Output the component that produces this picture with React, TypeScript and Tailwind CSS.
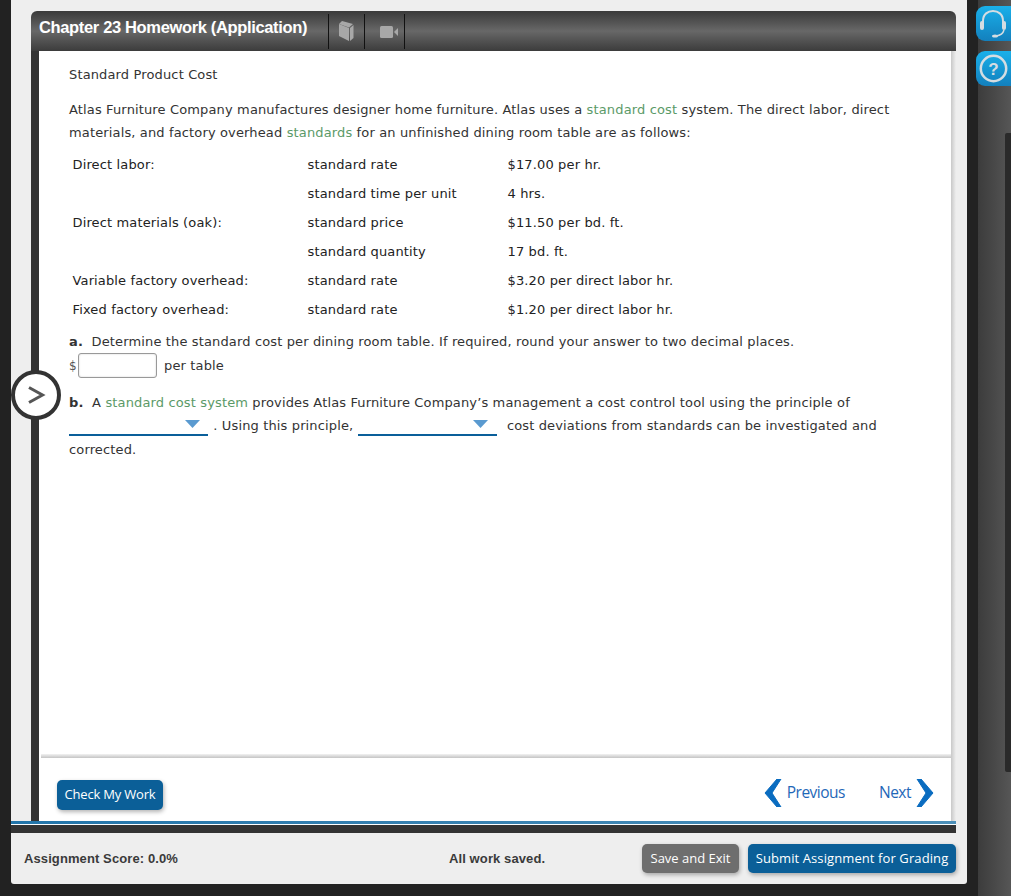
import React from "react";

const Term = ({ children }: { children: React.ReactNode }) => (
  <span className="text-[#5b9a68]">{children}</span>
);

const Row = ({ a, b, c }: { a?: string; b: string; c: string }) => (
  <div className="grid h-[29px] grid-cols-[235px_200px_1fr] items-center text-[#222]">
    <div>{a}</div>
    <div>{b}</div>
    <div>{c}</div>
  </div>
);

const Drop = ({ cls }: { cls?: string }) => (
  <span className={`relative inline-block h-[22px] w-[139px] border-b-2 border-[#0a5f9a] align-top ${cls ?? ""}`}>
    <svg className="absolute right-[8.5px] top-[6px]" width="15" height="8" viewBox="0 0 15 8">
      <path d="M0 0H15L7.5 8Z" fill="#5a9ad0" />
    </svg>
  </span>
);

const sideBtn = "-ml-[2px] flex h-[35px] w-[35px] items-center rounded-l-[9px] bg-gradient-to-b from-[#1ab0ea] to-[#1380bd] pl-[3px]";

export default function App() {
  return (
    <div className="relative flex h-[896px] w-[1011px] overflow-hidden bg-[#222] font-['DejaVu_Sans',sans-serif] text-[13px] tracking-[0.14px]">
      <div className="ml-[11px] flex h-[884px] w-[956px] flex-col rounded-b-[3px] bg-[#eee]">
        <div className="ml-[20px] mt-[11px] flex h-[40px] w-[925px] shrink-0 items-stretch rounded-t-[6px] bg-gradient-to-b from-[#3a3a3a] via-[#686868] to-[#3c3c3c]">
          <div className="w-[297px] pl-[8px] pt-[4px] font-['Liberation_Sans',sans-serif] text-[16.5px] font-bold tracking-[-0.35px] text-white">
            Chapter 23 Homework (Application)
          </div>
          <div className="mt-[3px] flex h-[35px] w-[37px] items-center justify-center border-x border-[#111] pb-[1px]">
            <svg width="15" height="20" viewBox="0 0 15 20">
              <path d="M0 3 L10 7 V20 L0 15 Z" fill="#a8a8a8" />
              <path d="M0 3 L3 0 L14 3 L10 6.5 Z" fill="#a8a8a8" />
              <path d="M11 7 L14.5 4 V17 L11 20 Z" fill="#a8a8a8" />
            </svg>
          </div>
          <div className="mt-[3px] flex h-[35px] w-[40px] items-center justify-center border-r border-[#111] pl-[8px]">
            <svg width="18" height="12" viewBox="0 0 18 12">
              <rect x="0" y="0" width="13" height="12" rx="1.5" fill="#a8a8a8" />
              <path d="M14 6 L18 2 V10 Z" fill="#a8a8a8" />
            </svg>
          </div>
        </div>

        <div className="ml-[20px] flex h-[770px] w-[925px] shrink-0 border-l-[8px] border-l-[#333]">
          <div className="flex min-w-0 flex-1 flex-col bg-white">
            <div className="relative h-[707px] shrink-0 pl-[30px] pr-[40px] text-[#333]">
              <div className="pt-[14px] leading-[19px]">Standard Product Cost</div>
              <p className="mt-[14px] leading-[23px]">
                Atlas Furniture Company manufactures designer home furniture. Atlas uses a <Term>standard cost</Term> system. The direct labor, direct materials, and factory overhead <Term>standards</Term> for an unfinished dining room table are as follows:
              </p>
              <div className="mt-[6px] pl-[3.5px]">
                <Row a="Direct labor:" b="standard rate" c="$17.00 per hr." />
                <Row b="standard time per unit" c="4 hrs." />
                <Row a="Direct materials (oak):" b="standard price" c="$11.50 per bd. ft." />
                <Row b="standard quantity" c="17 bd. ft." />
                <Row a="Variable factory overhead:" b="standard rate" c="$3.20 per direct labor hr." />
                <Row a="Fixed factory overhead:" b="standard rate" c="$1.20 per direct labor hr." />
              </div>
              <p className="mt-[8px] leading-[19px]">
                <b>a.</b>&nbsp; Determine the standard cost per dining room table. If required, round your answer to two decimal places.
              </p>
              <div className="mt-[2px] flex h-[26px] items-center">
                <span className="w-[9px] text-[12px] text-[#555]">$</span>
                <span className="-mt-[1px] h-[25px] w-[79px] rounded-[3px] border border-[#999] bg-white shadow-[inset_0_0_2px_#ccc]" />
                <span className="ml-[7px]">per table</span>
              </div>
              <p className="mt-[12px] leading-[23.4px]">
                <b>b.</b>&nbsp; A <Term>standard cost system</Term> provides Atlas Furniture Company’s management a cost control tool using the principle of
                <br />
                <Drop cls="mr-[1px]" /> . Using this principle, <Drop cls="mr-[6px]" /> cost deviations from standards can be investigated and corrected.
              </p>
              <div className="absolute bottom-0 left-[2px] right-0 h-[4px] bg-gradient-to-b from-[#f2f2f2] to-[#c4c4c4]" />
            </div>
            <div className="flex h-[63px] items-start justify-between pl-[18px] pr-[17px] pt-[22px]">
              <button className="flex h-[30px] w-[106px] items-center justify-center rounded-[5px] bg-[#0b5f98] font-['Open_Sans',sans-serif] text-[13px] font-medium tracking-[-0.2px] text-white shadow-[1px_2px_4px_rgba(0,0,0,0.3)]">
                Check My Work
              </button>
              <div className="-mt-[1px] flex h-[28px] items-center font-['Open_Sans',sans-serif] text-[15.5px] tracking-[-0.5px] text-[#1f68b8]">
                <svg width="18" height="28" viewBox="0 0 18 28">
                  <path d="M13 0 H17 L8 14 L17 28 H13 L1 14 Z" fill="#0a6cc0" stroke="#0a6cc0" />
                </svg>
                <span className="ml-[5px]">Previous</span>
                <span className="ml-[34px]">Next</span>
                <svg className="ml-[5px]" width="18" height="28" viewBox="0 0 18 28">
                  <path d="M5 0 H1 L10 14 L1 28 H5 L17 14 Z" fill="#0a6cc0" stroke="#0a6cc0" />
                </svg>
              </div>
            </div>
          </div>
          <div className="h-full w-[5px] bg-gradient-to-r from-[#c8c8c8] to-[#eee]" />
        </div>

        <div className="h-[3px] w-[945px] shrink-0 bg-gradient-to-r from-[#2275aa] to-[#4c8fb8]" />
        <div className="h-[1px] w-[945px] shrink-0 bg-white" />
        <div className="h-[8px] w-[945px] shrink-0 bg-[#333]" />
        <div className="flex flex-1 items-center pl-[13px] pr-[11px] font-['Liberation_Sans',sans-serif] text-[13px] font-bold tracking-[0.1px] text-[#3a3a3a]">
          <div className="w-[425px]">Assignment Score: 0.0%</div>
          <div>All work saved.</div>
          <div className="ml-auto flex gap-[9px] font-['Open_Sans',sans-serif] text-[13px] font-medium tracking-normal text-white">
            <button className="h-[29px] w-[97px] rounded-[5px] bg-[#6e6e6e] shadow-[1px_2px_4px_rgba(0,0,0,0.3)]">Save and Exit</button>
            <button className="h-[29px] w-[208px] rounded-[5px] bg-[#0b5f98] tracking-[0.1px] shadow-[1px_2px_4px_rgba(0,0,0,0.3)]">Submit Assignment for Grading</button>
          </div>
        </div>
      </div>

      <div className="ml-[11px] flex h-[896px] w-[33px] flex-col gap-[10px] bg-gradient-to-r from-[#3c3c3c] to-[#565656] pt-[6px]">
        <div className={sideBtn}>
          <svg width="28" height="28" viewBox="0 0 28 28" fill="none">
            <path d="M4 14 V11 C4 4 9 1 14 1 C19 1 24 4 24 11 V14" stroke="#d5dde2" strokeWidth="2" />
            <rect x="1" y="11" width="4" height="9" rx="2" fill="#d5dde2" />
            <rect x="23" y="11" width="4" height="9" rx="2" fill="#d5dde2" />
            <path d="M25 20 C24 24 21 25.5 17 26" stroke="#d5dde2" strokeWidth="1.5" />
            <ellipse cx="16" cy="26" rx="3" ry="1.6" fill="#d5dde2" />
          </svg>
        </div>
        <div className={sideBtn}>
          <svg width="29" height="29" viewBox="0 0 29 29" fill="none">
            <circle cx="14.5" cy="14.5" r="12.7" stroke="#d5dde2" strokeWidth="2.5" />
            <text x="14.5" y="20.5" textAnchor="middle" fontFamily="Liberation Sans, sans-serif" fontWeight="700" fontSize="17" fill="#d5dde2">?</text>
          </svg>
        </div>
      </div>

      <div className="absolute left-[1005px] top-[133px] h-[639px] w-[6px] rounded-l-[2px] bg-[#2a2a2a]" />

      <div className="absolute left-[11px] top-[370px] flex h-[50px] w-[50px] items-center justify-center rounded-full border-4 border-[#333] bg-white">
        <svg width="20" height="22" viewBox="0 0 20 22" fill="none">
          <path d="M3 3.5 L16.5 11 L3 18.5" stroke="#555" strokeWidth="3" />
        </svg>
      </div>
    </div>
  );
}
